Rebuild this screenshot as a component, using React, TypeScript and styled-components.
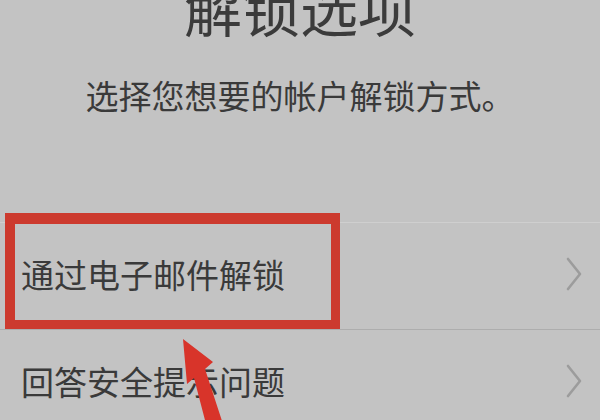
import React from "react";
import styled, { createGlobalStyle } from "styled-components";

const Global = createGlobalStyle`
  html, body {
    margin: 0;
    padding: 0;
    background: #c3c3c3;
  }
  body {
    font-family: "Noto Sans CJK SC", "Noto Sans", sans-serif;
  }
`;

const Screen = styled.div`
  position: relative;
  width: 600px;
  height: 420px;
  overflow: hidden;
  background: #c3c3c3;
  display: flex;
  flex-direction: column;
`;

const Header = styled.header`
  display: flex;
  flex-direction: column;
  align-items: center;
  margin-top: -22px;
`;

const Title = styled.h1`
  margin: 0;
  font-size: 58px;
  line-height: 1;
  font-weight: 400;
  color: #3b3b3b;
`;

const Subtitle = styled.p`
  margin: 43px 0 0;
  font-size: 33px;
  line-height: 1;
  color: #3a3a3a;
`;

const List = styled.ul`
  list-style: none;
  margin: 110px 0 0;
  padding: 0;
`;

const Row = styled.li<{ $line: string }>`
  position: relative;
  box-sizing: border-box;
  height: 107px;
  display: flex;
  align-items: center;
  justify-content: space-between;
  padding: 0 18px 4px 21px;
  border-top: 1px solid ${(p) => p.$line};
`;

const Label = styled.span`
  font-size: 33px;
  line-height: 1;
  color: #3a3a3a;
`;

const Chevron = styled.svg`
  width: 16px;
  height: 34px;
  flex: none;
`;

const Highlight = styled.div`
  position: absolute;
  left: 5px;
  top: -10px;
  width: 335px;
  height: 117px;
  box-sizing: border-box;
  border: 10px solid #cc3a2e;
  border-right-width: 9px;
  border-top-width: 11px;
  pointer-events: none;
`;

const Overlay = styled.svg`
  position: absolute;
  left: 0;
  top: 0;
  width: 600px;
  height: 420px;
  pointer-events: none;
`;

const ChevronIcon = () => (
  <Chevron viewBox="0 0 16 34">
    <polyline
      points="2,2 14,17 2,32"
      fill="none"
      stroke="#9c9c9c"
      strokeWidth="2.6"
      strokeLinecap="round"
      strokeLinejoin="round"
    />
  </Chevron>
);

export default function App() {
  return (
    <>
      <Global />
      <Screen>
        <Header>
          <Title>解锁选项</Title>
          <Subtitle>选择您想要的帐户解锁方式。</Subtitle>
        </Header>
        <List>
          <Row $line="#cfcfcf">
            <Label>通过电子邮件解锁</Label>
            <ChevronIcon />
            <Highlight />
          </Row>
          <Row $line="#adadad">
            <Label>回答安全提示问题</Label>
            <ChevronIcon />
          </Row>
        </List>
        <Overlay viewBox="0 0 600 420">
          <polygon
            points="183,339 213,362 205,369 223,424 206,424 194,378 187,384"
            fill="#d8342a"
          />
        </Overlay>
      </Screen>
    </>
  );
}
